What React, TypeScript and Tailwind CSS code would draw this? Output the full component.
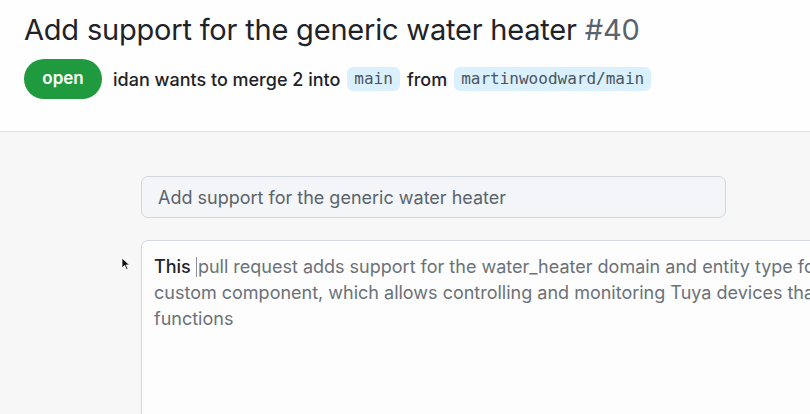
export default function App() {
  return (
    <div className="w-[810px] h-[414px] overflow-hidden bg-[#f7f7f8] font-['Inter',sans-serif] relative">
      <header className="h-[132px] bg-[#fefefe] border-b border-[#e3e4e6] px-6 pt-[12px]">
        <h1 className="text-[29px] leading-[36px] text-[#1f2328] font-normal tracking-[-0.2px] whitespace-nowrap">
          Add support for the generic water heater <span className="text-[#59636e]">#40</span>
        </h1>
        <div className="flex items-center mt-[11px] gap-[11px]">
          <span className="h-[40px] w-[78px] rounded-full bg-[#1f9a3f] text-white text-[17px] font-semibold flex items-center justify-center">
            open
          </span>
          <div className="flex items-center text-[18px] font-medium text-[#1f2328] gap-[7px] whitespace-nowrap">
            <span>idan wants to merge 2 into</span>
            <code className="font-['DejaVu_Sans_Mono',monospace] text-[16px] font-normal text-[#4a5560] bg-[#daf0fc] rounded-[6px] px-[7px] h-[24px] flex items-center">main</code>
            <span>from</span>
            <code className="font-['DejaVu_Sans_Mono',monospace] text-[16px] font-normal text-[#4a5560] bg-[#daf0fc] rounded-[6px] px-[7px] h-[24px] flex items-center">martinwoodward/main</code>
          </div>
        </div>
      </header>
      <main className="pl-[141px] pt-[44px]">
        <div className="w-[585px] h-[42px] rounded-[7px] border border-[#d3d8de] bg-[#f3f5f8] flex items-center px-4 text-[18px] text-[#5b636b] whitespace-nowrap">
          Add support for the generic water heater
        </div>
        <div className="mt-[22px] h-[200px] w-[700px] rounded-tl-[7px] border border-[#d3d8de] bg-[#fdfdfd] px-3 pt-[13px] text-[18px] leading-[26px] text-[#6b7178] whitespace-nowrap">
          <div>
            <span className="text-[#1f2328] font-medium">This</span>{" "}
            <span className="inline-block w-[1px] h-[20px] bg-[#8a9099] align-[-4px] mr-[1px]" />
            pull request adds support for the water_heater domain and entity type for
          </div>
          <div>custom component, which allows controlling and monitoring Tuya devices that</div>
          <div>functions</div>
        </div>
      </main>
      <svg className="absolute left-[121px] top-[257px]" width="10" height="14" viewBox="0 0 10 14">
        <path d="M1 1 L1 11 L3.5 8.5 L5.5 12.5 L7 11.8 L5 8 L8.5 8 Z" fill="#111" stroke="#fff" strokeWidth="0.8" />
      </svg>
    </div>
  );
}
